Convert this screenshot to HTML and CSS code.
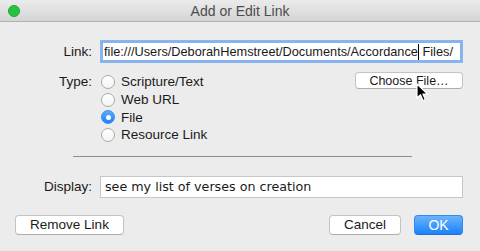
FILE: index.html
```
<!DOCTYPE html>
<html>
<head>
<meta charset="utf-8">
<link rel="stylesheet" href="styles.css">
</head>
<body>
<div class="window">
  <div class="titlebar">
    <span class="light"></span>
    <span class="title">Add or Edit Link</span>
  </div>
  <div class="content">
    <div class="row link-row">
      <label class="label">Link:</label>
      <div class="field focus"><span>file:///Users/DeborahHemstreet/Documents/Accordance</span><span class="caret"></span><span>&nbsp;Files/</span></div>
    </div>
    <div class="row type-row">
      <label class="label type-label">Type:</label>
      <div class="radios">
        <div class="radio-item"><span class="radio"></span><span>Scripture/Text</span></div>
        <div class="radio-item"><span class="radio"></span><span>Web URL</span></div>
        <div class="radio-item"><span class="radio on"></span><span>File</span></div>
        <div class="radio-item"><span class="radio"></span><span>Resource Link</span></div>
      </div>
      <div class="choose-wrap">
        <div class="btn choose">Choose File…</div>
      </div>
    </div>
    <div class="sep"></div>
    <div class="row display-row">
      <label class="label">Display:</label>
      <div class="field plain"><span class="disp">see my list of verses on creation</span></div>
    </div>
    <div class="buttons">
      <div class="btn remove">Remove Link</div>
      <div class="spacer"></div>
      <div class="btn cancel">Cancel</div>
      <div class="btn ok">OK</div>
    </div>
  </div>
  <svg class="pointer" width="14" height="20" viewBox="0 0 14 20">
    <path d="M1 1 L1 15 L4.5 11.8 L7 17.5 L9.3 16.5 L6.9 11 L11.5 11 Z" fill="#000" stroke="#fff" stroke-width="1.2" stroke-linejoin="round"/>
  </svg>
</div>
</body>
</html>
```
FILE: styles.css
```
* { box-sizing: border-box; }
html, body { margin: 0; padding: 0; }
body {
  width: 480px;
  height: 251px;
  overflow: hidden;
  font-family: "Liberation Sans", Arial, sans-serif;
  font-size: 13px;
  color: #1a1a1a;
}
.window {
  position: relative;
  width: 480px;
  height: 251px;
  background: #ececec;
  display: flex;
  flex-direction: column;
}
.titlebar {
  height: 22px;
  flex: none;
  background: linear-gradient(#ebebeb, #d5d5d5);
  border-bottom: 1px solid #b1b1b1;
  display: flex;
  align-items: center;
  justify-content: center;
  position: relative;
}
.light {
  position: absolute;
  left: 8px;
  top: 5px;
  width: 12px;
  height: 12px;
  border-radius: 50%;
  background: #27c33f;
  border: 0.5px solid #1ea834;
}
.title {
  font-size: 14px;
  color: #4d4d4d;
  margin-top: 1px;
}
.content {
  padding: 18px 17px 0 15px;
  display: flex;
  flex-direction: column;
}
.row {
  display: flex;
  align-items: center;
}
.label {
  width: 77px;
  text-align: right;
  font-size: 13.5px;
  margin-right: 8px;
  flex: none;
}
.field {
  width: 363px;
  background: #fff;
  display: flex;
  align-items: center;
  white-space: nowrap;
  overflow: hidden;
}
.field.focus {
  height: 23px;
  border: 1px solid #8db5ec;
  box-shadow: inset 0 0 0 2px #86b3f2;
  padding-left: 3px;
  font-size: 12.75px;
}
.caret {
  display: inline-block;
  width: 1px;
  height: 16px;
  background: #000;
}
.field.plain {
  height: 22px;
  border: 1px solid #c6c6c6;
  padding-left: 4px;
}
.disp {
  font-family: "DejaVu Sans", sans-serif;
  font-size: 12.7px;
}
.type-row {
  align-items: flex-start;
  margin-top: 10px;
}
.type-label {
  line-height: 18px;
}
.radios {
  display: flex;
  flex-direction: column;
  margin-left: 1px;
}
.radio-item {
  height: 17.7px;
  display: flex;
  align-items: center;
  font-size: 13.5px;
}
.radio {
  width: 14px;
  height: 14px;
  border-radius: 50%;
  background: linear-gradient(#ffffff, #f4f4f4);
  border: 1px solid #a9a9a9;
  margin-right: 6px;
  display: flex;
  align-items: center;
  justify-content: center;
}
.radio.on {
  background: linear-gradient(#5aaefb, #1f7ff6);
  border-color: #3d8ff0;
}
.radio.on::after {
  content: "";
  width: 5px;
  height: 5px;
  border-radius: 50%;
  background: #fff;
}
.choose-wrap {
  margin-left: auto;
  margin-top: -1px;
}
.btn {
  height: 20px;
  background: #fff;
  border: 1px solid #c3c3c3;
  border-bottom-color: #adadad;
  border-radius: 4px;
  display: flex;
  align-items: center;
  justify-content: center;
  font-size: 13.5px;
}
.choose {
  width: 108px;
  height: 17px;
  font-size: 12.5px;
}
.sep {
  width: 339px;
  height: 1px;
  background: #8e8e8e;
  margin: 12px 0 0 58px;
}
.display-row {
  margin-top: 19px;
}
.buttons {
  display: flex;
  margin-top: 17px;
}
.spacer { flex: 1; }
.remove { width: 109px; }
.cancel { width: 72px; margin-right: 13px; }
.ok {
  width: 49px;
  background: linear-gradient(#6cb3fa, #1a82fb);
  border-color: #2f8af3;
  border-bottom-color: #1c6fe0;
  color: #fff;
  font-size: 14px;
}
.pointer {
  position: absolute;
  left: 416px;
  top: 83px;
}
```
